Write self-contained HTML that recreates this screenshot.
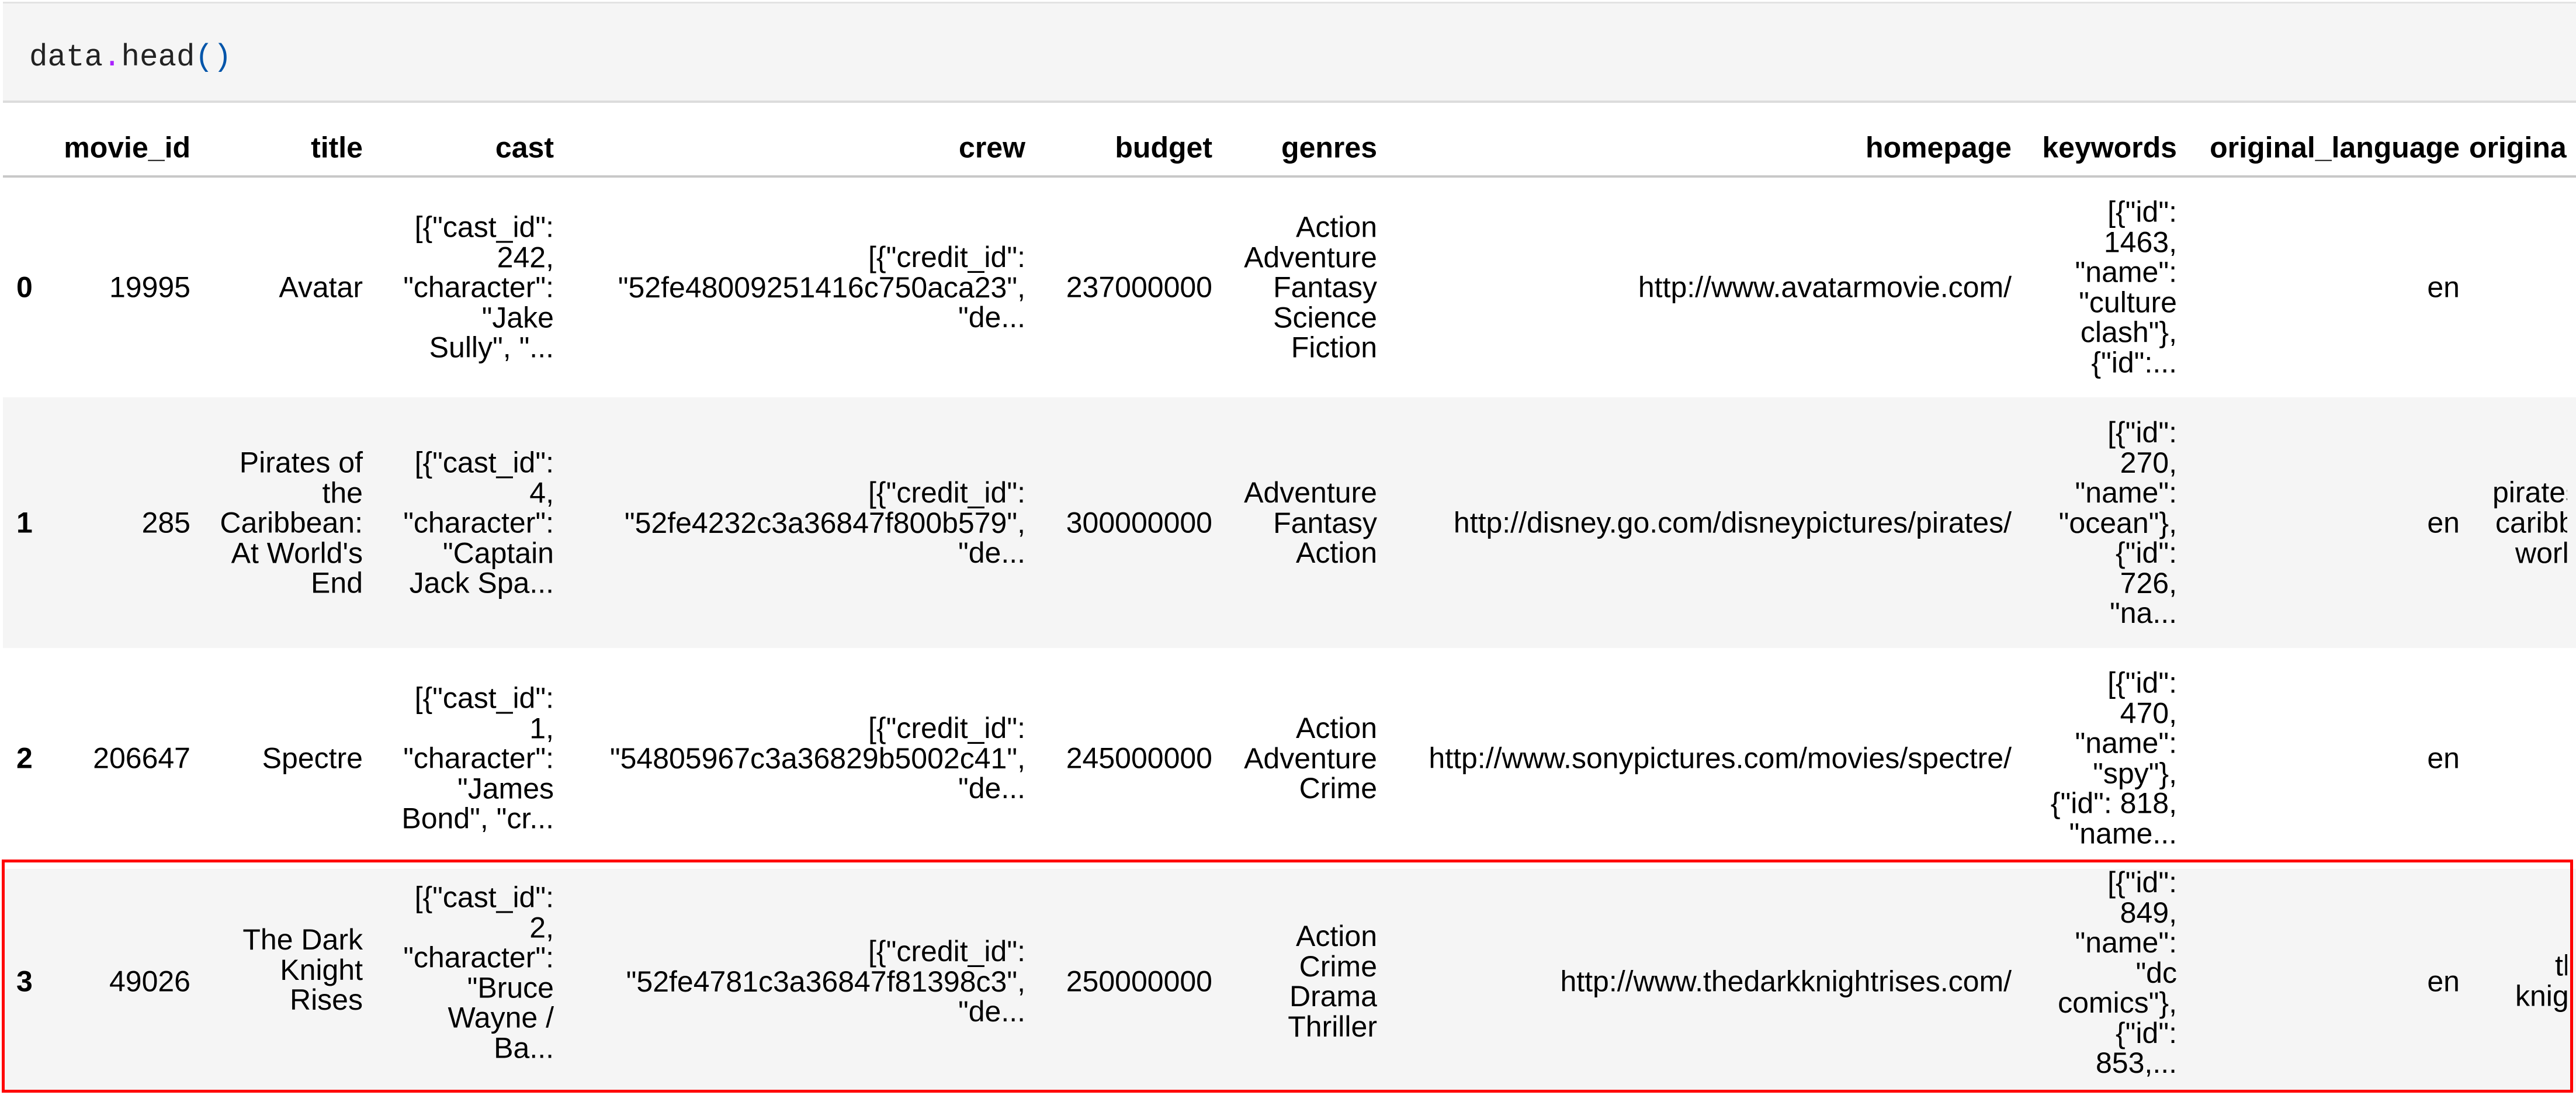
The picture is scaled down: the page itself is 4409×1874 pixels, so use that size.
<!DOCTYPE html>
<html><head><meta charset="utf-8"><style>
html,body{margin:0;padding:0;}
body{width:4409px;height:1874px;position:relative;overflow:hidden;background:#fff;font-family:"Liberation Sans",Arial,sans-serif;font-size:50px;line-height:51.5px;color:#000;}
.code{position:absolute;left:5px;top:3px;width:4404px;height:173px;background:#f5f5f5;border-top:3px solid #e3e3e3;border-bottom:4px solid #dcdcdc;box-sizing:border-box;}
.code span.t{position:absolute;left:45px;top:62px;font-family:"Liberation Mono",monospace;font-size:52.5px;line-height:60px;color:#222;white-space:pre;}
.hb{position:absolute;left:5px;width:4404px;top:300px;height:4px;background:#c8c8c8;}
.row{position:absolute;left:5px;width:4404px;}
.c{position:absolute;text-align:right;white-space:nowrap;transform:translateY(-50%);}
.h{font-weight:bold;}
.i{position:absolute;left:28px;font-weight:bold;transform:translateY(-50%);}
.red{position:absolute;left:3px;top:1471px;width:4401px;height:399px;border:5px solid #ff0000;box-sizing:border-box;}
.l{position:absolute;white-space:nowrap;transform:translateY(-50%);}
.main{position:absolute;left:0;top:0;width:4409px;height:1874px;}
.clip{position:absolute;left:0;top:0;width:4394px;height:1874px;overflow:hidden;}
</style></head><body>
<div class="code"><span class="t">data<span style="color:#aa22ff">.</span>head<span style="color:#0055aa">()</span></span></div>
<div class="row" style="top:680px;height:429px;background:#f5f5f5"></div>
<div class="row" style="top:1487px;height:381px;background:#f5f5f5"></div>
<div class="hb"></div>
<div class="main">
<div class="c h" style="top:253px;right:4083px">movie_id</div>
<div class="c h" style="top:253px;right:3788px">title</div>
<div class="c h" style="top:253px;right:3461px">cast</div>
<div class="c h" style="top:253px;right:2654px">crew</div>
<div class="c h" style="top:253px;right:2334px">budget</div>
<div class="c h" style="top:253px;right:2052px">genres</div>
<div class="c h" style="top:253px;right:966px">homepage</div>
<div class="c h" style="top:253px;right:683px">keywords</div>
<div class="c h" style="top:253px;right:199px">original_language</div>

<div class="i" style="top:492px">0</div>
<div class="c" style="top:492px;right:4083px">19995</div>
<div class="c" style="top:492px;right:3788px">Avatar</div>
<div class="c" style="top:492px;right:3461px">[{"cast_id":<br>242,<br>"character":<br>"Jake<br>Sully", "...</div>
<div class="c" style="top:492px;right:2654px">[{"credit_id":<br>"52fe48009251416c750aca23",<br>"de...</div>
<div class="c" style="top:492px;right:2334px">237000000</div>
<div class="c" style="top:492px;right:2052px">Action<br>Adventure<br>Fantasy<br>Science<br>Fiction</div>
<div class="c" style="top:492px;right:966px">http://www.avatarmovie.com/</div>
<div class="c" style="top:492px;right:683px">[{"id":<br>1463,<br>"name":<br>"culture<br>clash"},<br>{"id":...</div>
<div class="c" style="top:492px;right:199px">en</div>

<div class="i" style="top:895px">1</div>
<div class="c" style="top:895px;right:4083px">285</div>
<div class="c" style="top:895px;right:3788px">Pirates of<br>the<br>Caribbean:<br>At World's<br>End</div>
<div class="c" style="top:895px;right:3461px">[{"cast_id":<br>4,<br>"character":<br>"Captain<br>Jack Spa...</div>
<div class="c" style="top:895px;right:2654px">[{"credit_id":<br>"52fe4232c3a36847f800b579",<br>"de...</div>
<div class="c" style="top:895px;right:2334px">300000000</div>
<div class="c" style="top:895px;right:2052px">Adventure<br>Fantasy<br>Action</div>
<div class="c" style="top:895px;right:966px">http://disney.go.com/disneypictures/pirates/</div>
<div class="c" style="top:895px;right:683px">[{"id":<br>270,<br>"name":<br>"ocean"},<br>{"id":<br>726,<br>"na...</div>
<div class="c" style="top:895px;right:199px">en</div>

<div class="i" style="top:1298px">2</div>
<div class="c" style="top:1298px;right:4083px">206647</div>
<div class="c" style="top:1298px;right:3788px">Spectre</div>
<div class="c" style="top:1298px;right:3461px">[{"cast_id":<br>1,<br>"character":<br>"James<br>Bond", "cr...</div>
<div class="c" style="top:1298px;right:2654px">[{"credit_id":<br>"54805967c3a36829b5002c41",<br>"de...</div>
<div class="c" style="top:1298px;right:2334px">245000000</div>
<div class="c" style="top:1298px;right:2052px">Action<br>Adventure<br>Crime</div>
<div class="c" style="top:1298px;right:966px">http://www.sonypictures.com/movies/spectre/</div>
<div class="c" style="top:1298px;right:683px">[{"id":<br>470,<br>"name":<br>"spy"},<br>{"id": 818,<br>"name...</div>
<div class="c" style="top:1298px;right:199px">en</div>

<div class="i" style="top:1680px">3</div>
<div class="c" style="top:1680px;right:4083px">49026</div>
<div class="c" style="top:1660px;right:3788px">The Dark<br>Knight<br>Rises</div>
<div class="c" style="top:1665px;right:3461px">[{"cast_id":<br>2,<br>"character":<br>"Bruce<br>Wayne /<br>Ba...</div>
<div class="c" style="top:1680px;right:2654px">[{"credit_id":<br>"52fe4781c3a36847f81398c3",<br>"de...</div>
<div class="c" style="top:1680px;right:2334px">250000000</div>
<div class="c" style="top:1680px;right:2052px">Action<br>Crime<br>Drama<br>Thriller</div>
<div class="c" style="top:1680px;right:966px">http://www.thedarkknightrises.com/</div>
<div class="c" style="top:1665px;right:683px">[{"id":<br>849,<br>"name":<br>"dc<br>comics"},<br>{"id":<br>853,...</div>
<div class="c" style="top:1680px;right:199px">en</div>
</div>
<div class="clip">
<div class="l h" style="top:253px;left:4226px">original_title</div>
<div class="l" style="top:843px;left:4266px">pirates</div>
<div class="l" style="top:895px;left:4271px">caribbean</div>
<div class="l" style="top:947px;left:4305px">world</div>
<div class="l" style="top:1653px;left:4373px">the</div>
<div class="l" style="top:1705px;left:4305px">knight</div>
</div>
<div class="red"></div>
</body></html>
